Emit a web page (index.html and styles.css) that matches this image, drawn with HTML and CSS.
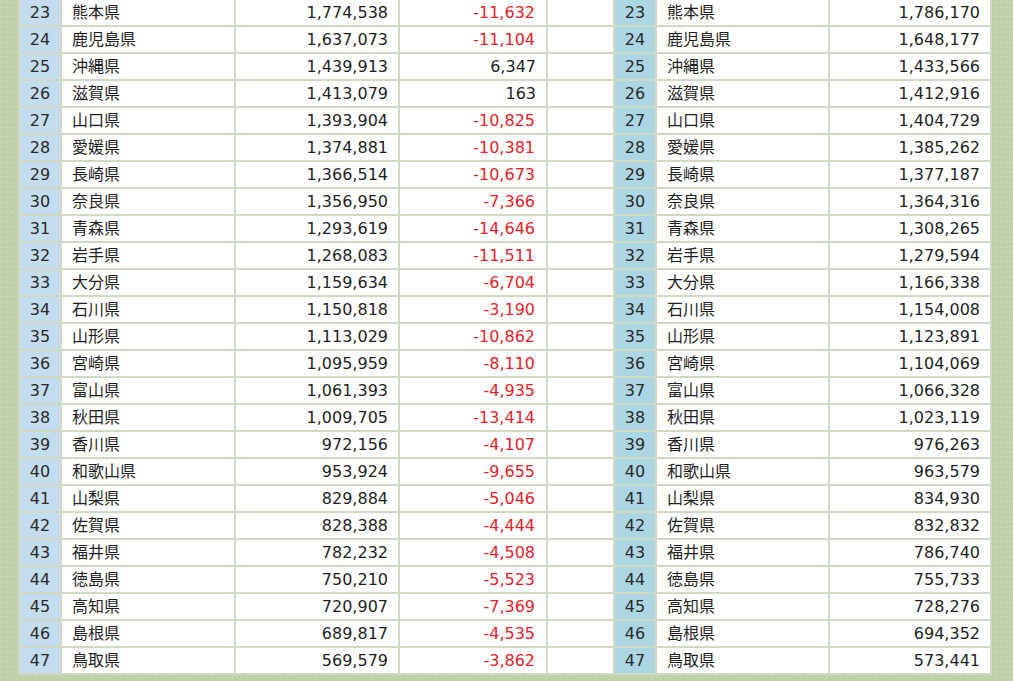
FILE: index.html
```html
<!DOCTYPE html>
<html lang="ja">
<head>
<meta charset="utf-8">
<title>都道府県別人口</title>
<link rel="stylesheet" href="styles.css">
</head>
<body>
<table class="pop">
<colgroup>
<col class="c-rank"><col class="c-name"><col class="c-pop"><col class="c-chg"><col class="c-sep"><col class="c-rank"><col class="c-name2"><col class="c-pop2">
</colgroup>
<tbody>
<tr><td class="rank">23</td><td class="name">熊本県</td><td class="num">1,774,538</td><td class="num neg">-11,632</td><td class="sep"></td><td class="rank r2">23</td><td class="name">熊本県</td><td class="num">1,786,170</td></tr>
<tr><td class="rank">24</td><td class="name">鹿児島県</td><td class="num">1,637,073</td><td class="num neg">-11,104</td><td class="sep"></td><td class="rank r2">24</td><td class="name">鹿児島県</td><td class="num">1,648,177</td></tr>
<tr><td class="rank">25</td><td class="name">沖縄県</td><td class="num">1,439,913</td><td class="num">6,347</td><td class="sep"></td><td class="rank r2">25</td><td class="name">沖縄県</td><td class="num">1,433,566</td></tr>
<tr><td class="rank">26</td><td class="name">滋賀県</td><td class="num">1,413,079</td><td class="num">163</td><td class="sep"></td><td class="rank r2">26</td><td class="name">滋賀県</td><td class="num">1,412,916</td></tr>
<tr><td class="rank">27</td><td class="name">山口県</td><td class="num">1,393,904</td><td class="num neg">-10,825</td><td class="sep"></td><td class="rank r2">27</td><td class="name">山口県</td><td class="num">1,404,729</td></tr>
<tr><td class="rank">28</td><td class="name">愛媛県</td><td class="num">1,374,881</td><td class="num neg">-10,381</td><td class="sep"></td><td class="rank r2">28</td><td class="name">愛媛県</td><td class="num">1,385,262</td></tr>
<tr><td class="rank">29</td><td class="name">長崎県</td><td class="num">1,366,514</td><td class="num neg">-10,673</td><td class="sep"></td><td class="rank r2">29</td><td class="name">長崎県</td><td class="num">1,377,187</td></tr>
<tr><td class="rank">30</td><td class="name">奈良県</td><td class="num">1,356,950</td><td class="num neg">-7,366</td><td class="sep"></td><td class="rank r2">30</td><td class="name">奈良県</td><td class="num">1,364,316</td></tr>
<tr><td class="rank">31</td><td class="name">青森県</td><td class="num">1,293,619</td><td class="num neg">-14,646</td><td class="sep"></td><td class="rank r2">31</td><td class="name">青森県</td><td class="num">1,308,265</td></tr>
<tr><td class="rank">32</td><td class="name">岩手県</td><td class="num">1,268,083</td><td class="num neg">-11,511</td><td class="sep"></td><td class="rank r2">32</td><td class="name">岩手県</td><td class="num">1,279,594</td></tr>
<tr><td class="rank">33</td><td class="name">大分県</td><td class="num">1,159,634</td><td class="num neg">-6,704</td><td class="sep"></td><td class="rank r2">33</td><td class="name">大分県</td><td class="num">1,166,338</td></tr>
<tr><td class="rank">34</td><td class="name">石川県</td><td class="num">1,150,818</td><td class="num neg">-3,190</td><td class="sep"></td><td class="rank r2">34</td><td class="name">石川県</td><td class="num">1,154,008</td></tr>
<tr><td class="rank">35</td><td class="name">山形県</td><td class="num">1,113,029</td><td class="num neg">-10,862</td><td class="sep"></td><td class="rank r2">35</td><td class="name">山形県</td><td class="num">1,123,891</td></tr>
<tr><td class="rank">36</td><td class="name">宮崎県</td><td class="num">1,095,959</td><td class="num neg">-8,110</td><td class="sep"></td><td class="rank r2">36</td><td class="name">宮崎県</td><td class="num">1,104,069</td></tr>
<tr><td class="rank">37</td><td class="name">富山県</td><td class="num">1,061,393</td><td class="num neg">-4,935</td><td class="sep"></td><td class="rank r2">37</td><td class="name">富山県</td><td class="num">1,066,328</td></tr>
<tr><td class="rank">38</td><td class="name">秋田県</td><td class="num">1,009,705</td><td class="num neg">-13,414</td><td class="sep"></td><td class="rank r2">38</td><td class="name">秋田県</td><td class="num">1,023,119</td></tr>
<tr><td class="rank">39</td><td class="name">香川県</td><td class="num">972,156</td><td class="num neg">-4,107</td><td class="sep"></td><td class="rank r2">39</td><td class="name">香川県</td><td class="num">976,263</td></tr>
<tr><td class="rank">40</td><td class="name">和歌山県</td><td class="num">953,924</td><td class="num neg">-9,655</td><td class="sep"></td><td class="rank r2">40</td><td class="name">和歌山県</td><td class="num">963,579</td></tr>
<tr><td class="rank">41</td><td class="name">山梨県</td><td class="num">829,884</td><td class="num neg">-5,046</td><td class="sep"></td><td class="rank r2">41</td><td class="name">山梨県</td><td class="num">834,930</td></tr>
<tr><td class="rank">42</td><td class="name">佐賀県</td><td class="num">828,388</td><td class="num neg">-4,444</td><td class="sep"></td><td class="rank r2">42</td><td class="name">佐賀県</td><td class="num">832,832</td></tr>
<tr><td class="rank">43</td><td class="name">福井県</td><td class="num">782,232</td><td class="num neg">-4,508</td><td class="sep"></td><td class="rank r2">43</td><td class="name">福井県</td><td class="num">786,740</td></tr>
<tr><td class="rank">44</td><td class="name">徳島県</td><td class="num">750,210</td><td class="num neg">-5,523</td><td class="sep"></td><td class="rank r2">44</td><td class="name">徳島県</td><td class="num">755,733</td></tr>
<tr><td class="rank">45</td><td class="name">高知県</td><td class="num">720,907</td><td class="num neg">-7,369</td><td class="sep"></td><td class="rank r2">45</td><td class="name">高知県</td><td class="num">728,276</td></tr>
<tr><td class="rank">46</td><td class="name">島根県</td><td class="num">689,817</td><td class="num neg">-4,535</td><td class="sep"></td><td class="rank r2">46</td><td class="name">島根県</td><td class="num">694,352</td></tr>
<tr><td class="rank">47</td><td class="name">鳥取県</td><td class="num">569,579</td><td class="num neg">-3,862</td><td class="sep"></td><td class="rank r2">47</td><td class="name">鳥取県</td><td class="num">573,441</td></tr>
</tbody>
</table>
</body>
</html>
```
FILE: styles.css
```css
html, body {
  margin: 0;
  padding: 0;
}
body {
  background-color: #bfd1aa;
  background-image:
    radial-gradient(circle at 30% 40%, rgba(255,255,255,0.12) 0 1px, transparent 1.5px),
    radial-gradient(circle at 70% 80%, rgba(120,140,100,0.08) 0 1px, transparent 1.5px);
  background-size: 5px 5px, 7px 7px;
  font-family: "DejaVu Sans", "Noto Sans CJK JP", sans-serif;
  font-size: 16px;
  color: #1f1f1f;
}
.pop {
  margin: -2px 0 0 18px;
  border-collapse: separate;
  border-spacing: 2px;
  background: #d0d9c4;
  table-layout: fixed;
  width: 974px;
}
.c-rank { width: 40px; }
.c-name { width: 172px; }
.c-pop { width: 162px; }
.c-chg { width: 146px; }
.c-sep { width: 65px; }
.c-name2 { width: 171px; }
.c-pop2 { width: 160px; }
.pop td {
  height: 25px;
  padding: 0;
  line-height: 25px;
  background: #fff;
  white-space: nowrap;
  overflow: hidden;
}
.pop td.rank {
  background: #c3dcee;
  text-align: center;
  color: #2a2a2a;
}
.pop td.rank.r2 {
  background: #acd6e3;
}
.pop td.name {
  padding-left: 10px;
}
.pop td.num {
  text-align: right;
  padding-right: 10px;
}
.pop td.neg {
  color: #e5222b;
  padding-right: 11px;
}
```
